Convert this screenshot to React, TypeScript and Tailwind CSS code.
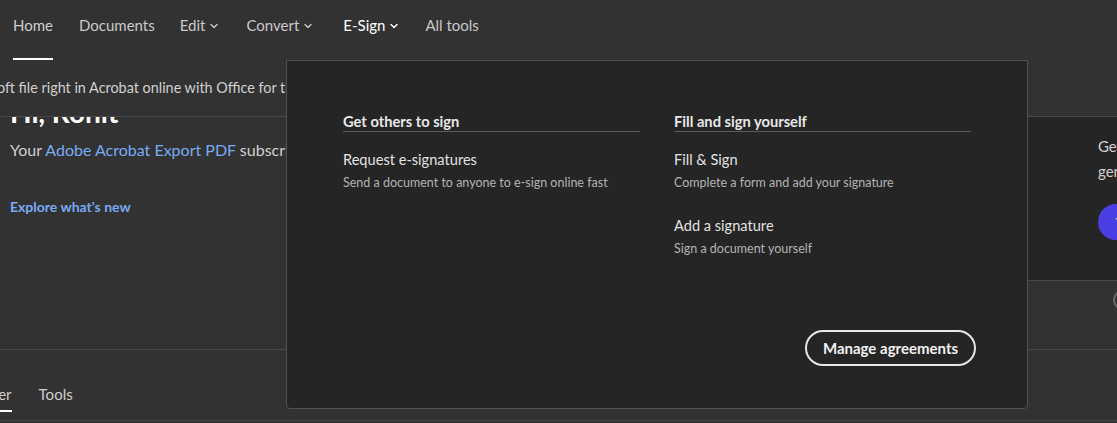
import React from "react";

const Chevron = ({ className = "" }: { className?: string }) => (
  <svg width="8" height="6" viewBox="0 0 8 6" className={className} fill="none">
    <path d="M1 1.5 L4 4.5 L7 1.5" stroke="currentColor" strokeWidth="1.4" strokeLinecap="round" strokeLinejoin="round" />
  </svg>
);

export default function App() {
  return (
    <div
      className="relative w-[1117px] h-[423px] overflow-hidden bg-[#323232] text-[#c9c9c9]"
      style={{ fontFamily: "Lato, 'Noto Sans', sans-serif" }}
    >
      {/* Top nav */}
      <nav className="h-[60px] flex items-stretch pl-[13px] gap-[26px] text-[15px]">
        <div className="flex items-center pb-[9px] border-b-2 border-white pt-[2px] text-[#cfcfcf]">Home</div>
        <div className="flex items-center pb-[9px] pt-[2px] border-b-2 border-transparent">Documents</div>
        <div className="flex items-center pb-[9px] pt-[2px] border-b-2 border-transparent gap-[5px] ml-[-1px]">
          Edit <Chevron />
        </div>
        <div className="flex items-center pb-[9px] pt-[2px] border-b-2 border-transparent gap-[5px] ml-[2px]">
          Convert <Chevron />
        </div>
        <div className="flex items-center pb-[9px] pt-[2px] border-b-2 border-transparent gap-[5px] ml-[5px] text-white">
          E-Sign <Chevron />
        </div>
        <div className="flex items-center pb-[9px] pt-[2px] border-b-2 border-transparent ml-[1px]">All tools</div>
      </nav>

      {/* Main */}
      <div className="relative">
        {/* Hero row */}
        <div className="flex h-[290px] border-b border-[#4a4a4a]">
          <div className="flex-1 pl-[10px] pt-[36px]">
            <h1 className="text-[28px] font-bold text-white leading-[32px] whitespace-nowrap">Hi, Rohit</h1>
            <p className="mt-[11px] text-[16px] leading-[22px] whitespace-nowrap text-[#cfcfcf]">
              Your <span className="text-[#78abf2]">Adobe Acrobat Export PDF</span> subscription is active
            </p>
            <a className="block mt-[36px] text-[14px] font-bold text-[#78abf2] leading-[20px]">Explore what's new</a>
          </div>
          <div className="flex flex-col w-[200px]">
            <div className="mt-[56px] h-[165px] bg-[#252525] border-y border-[#4a4a4a] pl-[181px] pt-[17px] whitespace-nowrap">
              <p className="text-[15px] leading-[25px] text-[#d2d2d2]">Get more done with</p>
              <p className="text-[15px] leading-[25px] text-[#d2d2d2]">generative AI</p>
              <button className="mt-[20px] h-[36px] rounded-full bg-[#4a3fe2] pl-[18px] pr-[16px] text-white text-[14px] font-bold">
                Try now
              </button>
            </div>
            <div className="pl-[196px] pt-[9px]">
              <div className="w-[20px] h-[20px] rounded-full border-2 border-[#6a6a6a]" />
            </div>
          </div>
        </div>

        {/* Banner overlay */}
        <div className="absolute top-0 left-0 right-0 h-[57px] bg-[#323232] border-b border-[#4a4a4a] flex items-center">
          <span className="ml-[-3px] text-[14.4px] text-[#d0d0d0] whitespace-nowrap">
            oft file right in Acrobat online with Office for the web
          </span>
        </div>

        {/* Bottom tabs */}
        <div className="h-[71px] border-b border-[#4a4a4a] flex items-end gap-[27px] text-[15px]">
          <div className="ml-[-46px] mb-[8px] pb-[6px] border-b-2 border-white leading-[20px] text-[#cfcfcf]">Discover</div>
          <div className="mb-[8px] pb-[6px] border-b-2 border-transparent leading-[20px] text-[#cfcfcf]">Tools</div>
        </div>
      </div>

      {/* E-Sign dropdown */}
      <div className="absolute left-[286px] top-[60px] w-[742px] h-[349px] bg-[#252525] border border-[#515151] rounded-b-[4px] flex flex-col">
        <div className="flex gap-[34px] pl-[56px] pt-[50px]">
          <div className="w-[297px]">
            <h3 className="text-[14.7px] font-bold text-[#e8e8e8] leading-[20px] border-b border-[#5c5c5c]">Get others to sign</h3>
            <div className="mt-[18px]">
              <p className="text-[14.6px] leading-[20px] text-[#e2e2e2]">Request e-signatures</p>
              <p className="mt-[4px] text-[12.5px] leading-[18px] text-[#b3b3b3]">Send a document to anyone to e-sign online fast</p>
            </div>
          </div>
          <div className="w-[297px]">
            <h3 className="text-[14.7px] font-bold text-[#e8e8e8] leading-[20px] border-b border-[#5c5c5c]">Fill and sign yourself</h3>
            <div className="mt-[18px]">
              <p className="text-[14.6px] leading-[20px] text-[#e2e2e2]">Fill &amp; Sign</p>
              <p className="mt-[4px] text-[12.5px] leading-[18px] text-[#b3b3b3]">Complete a form and add your signature</p>
            </div>
            <div className="mt-[24px]">
              <p className="text-[14.6px] leading-[20px] text-[#e2e2e2]">Add a signature</p>
              <p className="mt-[4px] text-[12.5px] leading-[18px] text-[#b3b3b3]">Sign a document yourself</p>
            </div>
          </div>
        </div>
        <div className="flex-1" />
        <div className="flex justify-end pr-[51px] pb-[42px]">
          <button className="h-[36px] w-[171px] rounded-full border-2 border-[#e6e6e6] text-[15px] font-bold text-[#f2f2f2]">
            Manage agreements
          </button>
        </div>
      </div>
    </div>
  );
}
